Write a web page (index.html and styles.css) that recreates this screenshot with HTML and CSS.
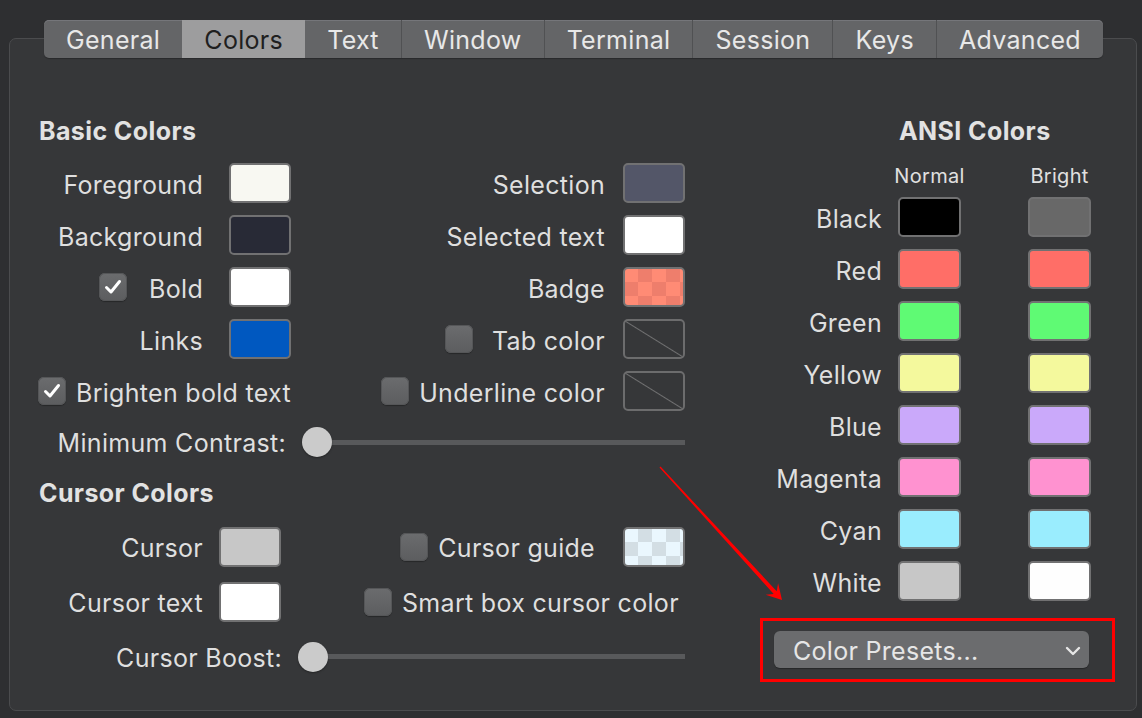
FILE: index.html
```html
<!DOCTYPE html>
<html lang="en">
<head>
<meta charset="utf-8">
<title>Colors</title>
<link rel="stylesheet" href="styles.css">
</head>
<body>
<div class="window">
  <nav class="tabs">
    <div class="tab">General</div>
    <div class="tab active">Colors</div>
    <div class="tab">Text</div>
    <div class="tab">Window</div>
    <div class="tab">Terminal</div>
    <div class="tab">Session</div>
    <div class="tab">Keys</div>
    <div class="tab">Advanced</div>
  </nav>
  <div class="panel">
    <section class="basic">
      <h2 class="heading">Basic Colors</h2>
      <div class="grid grid-basic">
        <div class="lbl">Foreground</div><div class="sw sw-fg"></div>
        <div class="lbl lbl-r">Selection</div><div class="sw sw-sel"></div>

        <div class="lbl">Background</div><div class="sw sw-bg"></div>
        <div class="lbl lbl-r">Selected text</div><div class="sw sw-white"></div>

        <div class="lbl"><span class="cb checked cb-bold"><svg viewBox="0 0 28 28"><path d="M7.5 14.5 L12 19 L20.5 8.5"/></svg></span>Bold</div><div class="sw sw-white"></div>
        <div class="lbl lbl-r">Badge</div><div class="sw sw-badge"></div>

        <div class="lbl">Links</div><div class="sw sw-links"></div>
        <div class="lbl lbl-r"><span class="cb cb-tab"></span>Tab color</div><div class="sw sw-none"></div>

        <div class="lbl lbl-wide"><span class="cb checked"><svg viewBox="0 0 28 28"><path d="M7.5 14.5 L12 19 L20.5 8.5"/></svg></span>Brighten bold text</div>
        <div class="lbl lbl-r"><span class="cb"></span>Underline color</div><div class="sw sw-none"></div>
      </div>
      <div class="slider-row contrast">
        <div class="slider-lbl">Minimum Contrast:</div>
        <div class="slider"><span class="knob"></span></div>
      </div>
      <h2 class="heading heading-cursor">Cursor Colors</h2>
      <div class="grid grid-cursor">
        <div class="lbl">Cursor</div><div class="sw sw-cursor"></div>
        <div class="lbl lbl-r"><span class="cb"></span>Cursor guide</div><div class="sw sw-guide"></div>

        <div class="lbl">Cursor text</div><div class="sw sw-white"></div>
        <div class="lbl lbl-smart"><span class="cb"></span>Smart box cursor color</div>
      </div>
      <div class="slider-row boost">
        <div class="slider-lbl">Cursor Boost:</div>
        <div class="slider"><span class="knob"></span></div>
      </div>
    </section>

    <section class="ansi">
      <h2 class="heading ansi-heading">ANSI Colors</h2>
      <div class="ansi-head">
        <div class="ansi-col">Normal</div>
        <div class="ansi-col ansi-col-b">Bright</div>
      </div>
      <div class="ansi-row"><div class="ansi-lbl">Black</div><div class="sw a-black"></div><div class="sw sw-b a-bblack"></div></div>
      <div class="ansi-row"><div class="ansi-lbl">Red</div><div class="sw a-red"></div><div class="sw sw-b a-red"></div></div>
      <div class="ansi-row"><div class="ansi-lbl">Green</div><div class="sw a-green"></div><div class="sw sw-b a-green"></div></div>
      <div class="ansi-row"><div class="ansi-lbl">Yellow</div><div class="sw a-yellow"></div><div class="sw sw-b a-yellow"></div></div>
      <div class="ansi-row"><div class="ansi-lbl">Blue</div><div class="sw a-blue"></div><div class="sw sw-b a-blue"></div></div>
      <div class="ansi-row"><div class="ansi-lbl">Magenta</div><div class="sw a-magenta"></div><div class="sw sw-b a-magenta"></div></div>
      <div class="ansi-row"><div class="ansi-lbl">Cyan</div><div class="sw a-cyan"></div><div class="sw sw-b a-cyan"></div></div>
      <div class="ansi-row"><div class="ansi-lbl">White</div><div class="sw a-white"></div><div class="sw sw-b a-bwhite"></div></div>
      <div class="highlight">
        <div class="presets">
          <span>Color Presets...</span>
          <svg class="chev" viewBox="0 0 16 10"><path d="M2 2 L8 8 L14 2"/></svg>
        </div>
      </div>
    </section>
  </div>
  <svg class="arrow" viewBox="0 0 1142 718" width="1142" height="718">
    <polygon points="659.5,467.5 660.5,466.5 776.7,591.2 778.1,583.2 782,600 765.6,594.7 773.7,594"/>
  </svg>
</div>
</body>
</html>
```

FILE: styles.css
```css
* { box-sizing: border-box; }

html, body {
  margin: 0;
  padding: 0;
}

body {
  background: #2e2f31;
  font-family: Inter, "Noto Sans", "DejaVu Sans", sans-serif;
  color: #dfdfdf;
  width: 1142px;
  height: 718px;
  overflow: hidden;
  letter-spacing: 0.3px;
}

.window {
  position: relative;
  padding-top: 20px;
  width: 1142px;
  height: 718px;
}

/* Tabs */
.tabs {
  position: relative;
  z-index: 1;
  display: flex;
  width: 1059px;
  height: 38px;
  margin-left: 44px;
  background: #646567;
  border-radius: 5px;
  box-shadow: inset 0 1px 0 #75767a, 0 1px 1px rgba(0,0,0,0.25);
  overflow: hidden;
}

.tab {
  flex: 1 1 auto;
  display: flex;
  align-items: center;
  justify-content: center;
  padding: 1px 18px 0;
  font-size: 25px;
  color: #e8e8e8;
  border-left: 1px solid #505153;
  white-space: nowrap;
}

.tab:first-child { border-left: none; }

.tab.active {
  background: #9d9d9e;
  color: #1f1f1f;
  border-left: none;
}

.tab.active + .tab { border-left: none; }

/* Panel */
.panel {
  display: flex;
  gap: 75px;
  width: 1128px;
  height: 673px;
  margin-top: -20px;
  margin-left: 9px;
  padding: 77px 0 0 28px;
  background: #363739;
  border: 1px solid #4b4c4e;
  border-radius: 7px;
}

.heading {
  margin: 0 0 11px 1px;
  height: 30px;
  line-height: 30px;
  font-size: 25px;
  font-weight: 700;
  letter-spacing: 0.4px;
  color: #e2e2e2;
  white-space: nowrap;
}

.heading-cursor { margin-top: 11px; }

/* Basic section */
.basic {
  width: 647px;
  display: flex;
  flex-direction: column;
}

.grid {
  display: grid;
  align-items: center;
}

.grid-basic {
  grid-template-columns: 191px 62px 332px 62px;
  grid-auto-rows: 52px;
}

.grid-cursor {
  grid-template-columns: 181px 62px 342px 62px;
  grid-auto-rows: 55px;
}

.lbl {
  display: flex;
  align-items: center;
  justify-content: flex-end;
  padding-right: 26px;
  padding-top: 3px;
  font-size: 25px;
  white-space: nowrap;
}

.lbl .cb { margin-top: -3px; }

.grid-cursor .lbl { padding-right: 16px; }

.lbl-r { padding-right: 18px; }
.grid-cursor .lbl-r { padding-right: 28px; }

.lbl-wide {
  grid-column: 1 / span 2;
  justify-content: flex-start;
  padding-right: 0;
}

.grid-cursor .lbl-smart {
  grid-column: 3 / span 2;
  padding-right: 0;
  justify-content: flex-start;
  padding-left: 83px;
}

/* Checkbox */
.cb {
  display: inline-flex;
  width: 28px;
  height: 28px;
  margin-right: 10px;
  border-radius: 6px;
  background: linear-gradient(#6b6c6e, #5c5d5f);
  box-shadow: inset 0 0 0 1px #555658, 0 1px 1px rgba(0,0,0,0.3);
  flex: none;
}

.cb svg {
  width: 28px;
  height: 28px;
}

.cb path {
  fill: none;
  stroke: #ffffff;
  stroke-width: 3;
  stroke-linecap: round;
  stroke-linejoin: round;
}

.cb-bold { margin-right: 22px; }
.cb-tab { margin-right: 19px; }

/* Swatches */
.sw {
  width: 62px;
  height: 40px;
  border: 2px solid #717172;
  border-radius: 5px;
}

.sw-fg { background: #f8f8f2; }
.sw-bg { background: #282a36; }
.sw-sel { background: #535668; }
.sw-white { background: #ffffff; }
.sw-links { background: #0058c0; }
.sw-cursor { background: #c7c7c7; }
.sw-badge {
  background: repeating-conic-gradient(#ee7e6c 0 25%, #ff8b75 0 50%) -1px -1px / 28px 28px;
}
.sw-guide {
  background: repeating-conic-gradient(#d3dee4 0 25%, #eaf7fe 0 50%) -1px -1px / 28px 28px;
}
.sw-none {
  border-color: #6c6c6d;
  background: linear-gradient(to top right, transparent calc(50% - 1px), #707071 50%, transparent calc(50% + 1px));
}

/* Sliders */
.slider-row {
  display: flex;
  align-items: center;
  gap: 16px;
}

.slider-row.contrast { height: 50px; }
.slider-row.boost { height: 55px; }

.slider-lbl {
  font-size: 25px;
  text-align: right;
  white-space: nowrap;
  padding-top: 2px;
}

.contrast .slider-lbl { width: 248px; }
.boost .slider-lbl { width: 244px; }

.slider {
  flex: 1;
  height: 30px;
  display: flex;
  align-items: center;
  background: linear-gradient(#58595b, #58595b) 15px 50% / calc(100% - 15px) 5px no-repeat;
}

.knob {
  width: 30px;
  height: 30px;
  border-radius: 50%;
  background: #cbcbcb;
  box-shadow: 0 1px 2px rgba(0,0,0,0.35);
}

/* ANSI */
.ansi {
  width: 355px;
  display: flex;
  flex-direction: column;
}

.ansi-heading { margin-left: 139px; margin-bottom: 0; }

.ansi-head {
  display: flex;
  height: 31px;
  margin-top: 14px;
  align-items: center;
  padding-left: 138px;
  font-size: 20px;
  color: #e0e0e0;
}

.ansi-col {
  width: 63px;
  display: flex;
  justify-content: center;
  white-space: nowrap;
}

.ansi-col-b { margin-left: 67px; }

.ansi-row {
  display: flex;
  align-items: center;
  height: 52px;
}

.ansi-lbl {
  width: 122px;
  margin-right: 16px;
  text-align: right;
  font-size: 25px;
  padding-top: 3px;
  white-space: nowrap;
}

.ansi .sw { width: 63px; }
.ansi .sw-b { margin-left: 67px; }

.a-black { background: #000000; }
.a-bblack { background: #686868; }
.a-red { background: #ff6e67; }
.a-green { background: #5ffa74; }
.a-yellow { background: #f4f99d; }
.a-blue { background: #caa9fa; }
.a-magenta { background: #ff92d0; }
.a-cyan { background: #9aedfe; }
.a-white { background: #c7c7c7; }
.a-bwhite { background: #fefefe; }

.highlight {
  margin-top: 11px;
  width: 355px;
  height: 64px;
  border: 3px solid #ff0000;
  padding: 10px 23px 11px 11px;
}

.presets {
  display: flex;
  align-items: center;
  justify-content: space-between;
  width: 315px;
  height: 37px;
  padding: 2px 8px 0 19px;
  background: #6b6c6e;
  border-radius: 6px;
  box-shadow: 0 1px 1px rgba(0,0,0,0.3);
  font-size: 25px;
  color: #e6e6e6;
}

.chev {
  width: 16px;
  height: 10px;
}

.chev path {
  fill: none;
  stroke: #e6e6e6;
  stroke-width: 2.4;
  stroke-linecap: round;
  stroke-linejoin: round;
}

/* Annotation arrow overlay */
.arrow {
  position: absolute;
  left: 0;
  top: 0;
  pointer-events: none;
}

.arrow polygon { fill: #ff0000; }
```
